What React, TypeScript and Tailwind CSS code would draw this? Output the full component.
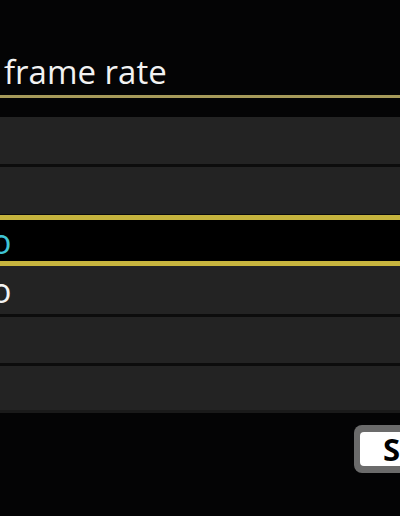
import React from "react";

export default function App() {
  return (
    <div className="w-[400px] h-[516px] bg-[#040405] overflow-hidden flex flex-col font-['Open_Sans',sans-serif]">
      <div className="h-[95px] pl-[4px] pt-[52px] text-[33px] leading-[40px] text-[#f2f2f2] whitespace-nowrap">
        frame rate
      </div>
      <div className="h-[3px] bg-[#a69a5a]" />
      <div className="h-[19px]" />
      <div className="flex flex-col bg-[#0c0c0c]">
        <div className="h-[47px] bg-[#232323]" />
        <div className="h-[3px]" />
        <div className="h-[47px] bg-[#232323]" />
        <div className="h-[1px]" />
        <div className="h-[51px] bg-black border-y-[5px] border-[#c6b43e] flex items-center text-[34px] leading-none text-[#3fc3d4]">
          <span className="ml-[-9px]">o</span>
        </div>
        <div className="h-[48px] bg-[#232323] flex items-center text-[34px] leading-none text-[#f2f2f2]">
          <span className="ml-[-9px]">o</span>
        </div>
        <div className="h-[3px]" />
        <div className="h-[46px] bg-[#232323]" />
        <div className="h-[3px]" />
        <div className="h-[44px] bg-[#232323]" />
        <div className="h-[3px] bg-[#1a1a1a]" />
      </div>
      <div className="h-[12px]" />
      <div className="flex pl-[354px]">
        <div className="shrink-0 w-[100px] h-[48px] rounded-[8px] bg-[#6b6b6b] px-[6px] py-[7px]">
          <div className="h-full rounded-[4px] bg-white flex items-center pl-[23px] text-[31px] font-bold text-black leading-none">
            SET
          </div>
        </div>
      </div>
    </div>
  );
}
